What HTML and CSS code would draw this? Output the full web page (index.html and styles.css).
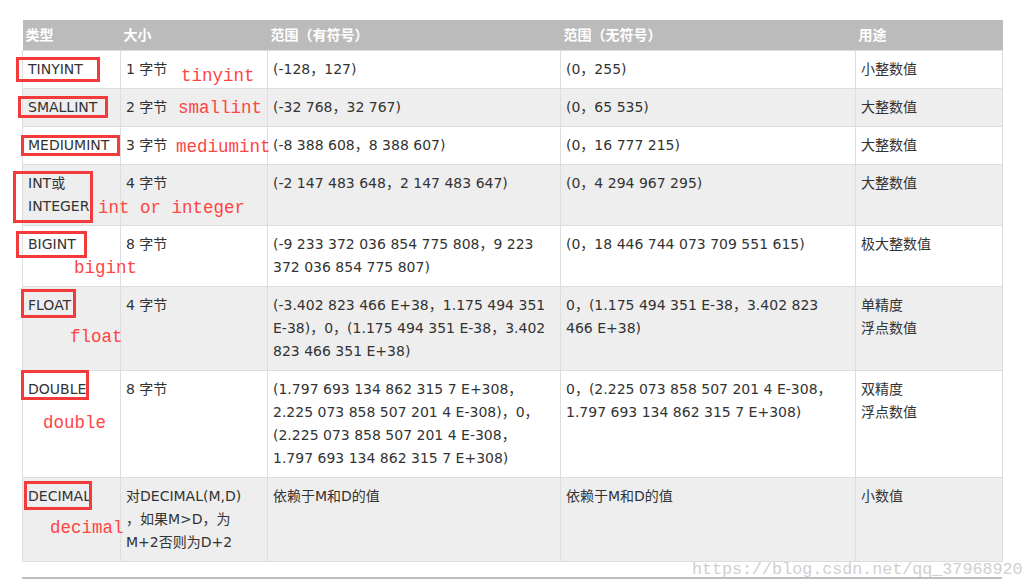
FILE: index.html
```html
<!DOCTYPE html>
<html lang="zh-CN">
<head>
<meta charset="utf-8">
<title>MySQL 数值类型</title>
<link rel="stylesheet" href="styles.css">
</head>
<body>
<div class="page">
  <table class="types">
    <colgroup>
      <col class="c-type"><col class="c-size"><col class="c-signed"><col class="c-unsigned"><col class="c-use">
    </colgroup>
    <thead>
      <tr><th>类型</th><th>大小</th><th>范围（有符号）</th><th>范围（无符号）</th><th>用途</th></tr>
    </thead>
    <tbody>
      <tr><td>TINYINT</td><td>1 字节</td><td>(-128，127)</td><td>(0，255)</td><td>小整数值</td></tr>
      <tr><td>SMALLINT</td><td>2 字节</td><td>(-32 768，32 767)</td><td>(0，65 535)</td><td>大整数值</td></tr>
      <tr><td>MEDIUMINT</td><td>3 字节</td><td>(-8 388 608，8 388 607)</td><td>(0，16 777 215)</td><td>大整数值</td></tr>
      <tr><td>INT或<br>INTEGER</td><td>4 字节</td><td>(-2 147 483 648，2 147 483 647)</td><td>(0，4 294 967 295)</td><td>大整数值</td></tr>
      <tr><td>BIGINT</td><td>8 字节</td><td>(-9 233 372 036 854 775 808，9 223<br>372 036 854 775 807)</td><td>(0，18 446 744 073 709 551 615)</td><td>极大整数值</td></tr>
      <tr><td>FLOAT</td><td>4 字节</td><td>(-3.402 823 466 E+38，1.175 494 351<br>E-38)，0，(1.175 494 351 E-38，3.402<br>823 466 351 E+38)</td><td>0，(1.175 494 351 E-38，3.402 823<br>466 E+38)</td><td>单精度<br>浮点数值</td></tr>
      <tr><td>DOUBLE</td><td>8 字节</td><td>(1.797 693 134 862 315 7 E+308，<br>2.225 073 858 507 201 4 E-308)，0，<br>(2.225 073 858 507 201 4 E-308，<br>1.797 693 134 862 315 7 E+308)</td><td>0，(2.225 073 858 507 201 4 E-308，<br>1.797 693 134 862 315 7 E+308)</td><td>双精度<br>浮点数值</td></tr>
      <tr><td>DECIMAL</td><td>对DECIMAL(M,D)<br>，如果M&gt;D，为<br>M+2否则为D+2</td><td>依赖于M和D的值</td><td>依赖于M和D的值</td><td>小数值</td></tr>
    </tbody>
  </table>
  <div class="rule"></div>

  <span class="mark m-tiny"></span>
  <span class="mark m-small"></span>
  <span class="mark m-medium"></span>
  <span class="mark m-int"></span>
  <span class="mark m-big"></span>
  <span class="mark m-float"></span>
  <span class="mark m-double"></span>
  <span class="mark m-decimal"></span>

  <span class="note n-tiny">tinyint</span>
  <span class="note n-small">smallint</span>
  <span class="note n-medium">mediumint</span>
  <span class="note n-int">int or integer</span>
  <span class="note n-big">bigint</span>
  <span class="note n-float">float</span>
  <span class="note n-double">double</span>
  <span class="note n-decimal">decimal</span>

  <span class="watermark">https://blog.csdn.net/qq_37968920</span>
</div>
</body>
</html>
```

FILE: styles.css
```css
html, body {
  margin: 0;
  padding: 0;
  background: #fff;
}

.page {
  position: relative;
  width: 1034px;
  height: 588px;
  overflow: hidden;
  padding: 20px 0 0 22px;
  box-sizing: border-box;
  font-family: "DejaVu Sans", "Noto Sans CJK SC", sans-serif;
  font-size: 14px;
  color: #333;
}

.types {
  border-collapse: collapse;
  table-layout: fixed;
  width: 980px;
}

.c-type { width: 98px; }
.c-size { width: 147px; }
.c-signed { width: 293px; }
.c-unsigned { width: 295px; }
.c-use { width: 147px; }

.types th {
  background: #bbbbbb;
  color: #fff;
  font-weight: bold;
  text-align: left;
  height: 30px;
  padding: 0 3px;
  line-height: 30px;
  border: 0;
  border-bottom: 1px solid #ddd;
  box-sizing: border-box;
}

.types td {
  border: 1px solid #ddd;
  padding: 7px 5px;
  line-height: 23px;
  vertical-align: top;
  white-space: nowrap;
}

.types tbody tr:nth-child(even) td {
  background: #eeeeee;
}

.rule {
  width: 980px;
  height: 2px;
  background: #bdbdbd;
  margin-top: 15px;
}

.mark {
  position: absolute;
  box-sizing: border-box;
  border: 3px solid #f33b3b;
}

.m-tiny { left: 16px; top: 57px; width: 84px; height: 25px; }
.m-small { left: 18px; top: 96px; width: 90px; height: 22px; }
.m-medium { left: 21px; top: 135px; width: 99px; height: 21px; }
.m-int { left: 13px; top: 171px; width: 80px; height: 52px; }
.m-big { left: 16px; top: 231px; width: 71px; height: 27px; }
.m-float { left: 21px; top: 289px; width: 55px; height: 29px; }
.m-double { left: 21px; top: 370px; width: 68px; height: 30px; }
.m-decimal { left: 24px; top: 481px; width: 68px; height: 29px; }

.note {
  position: absolute;
  font-family: "Liberation Mono", "DejaVu Sans Mono", monospace;
  font-size: 17.5px;
  line-height: 20px;
  color: #f44;
  white-space: nowrap;
}

.n-tiny { left: 181px; top: 66px; }
.n-small { left: 178px; top: 98px; }
.n-medium { left: 176px; top: 137px; }
.n-int { left: 98px; top: 198px; }
.n-big { left: 74px; top: 258px; }
.n-float { left: 70px; top: 327px; }
.n-double { left: 43px; top: 413px; }
.n-decimal { left: 50px; top: 518px; }

.watermark {
  position: absolute;
  left: 692px;
  top: 560px;
  font-family: "Liberation Mono", "DejaVu Sans Mono", monospace;
  font-size: 16.7px;
  line-height: 20px;
  color: #cfcfcf;
  white-space: nowrap;
}
```
